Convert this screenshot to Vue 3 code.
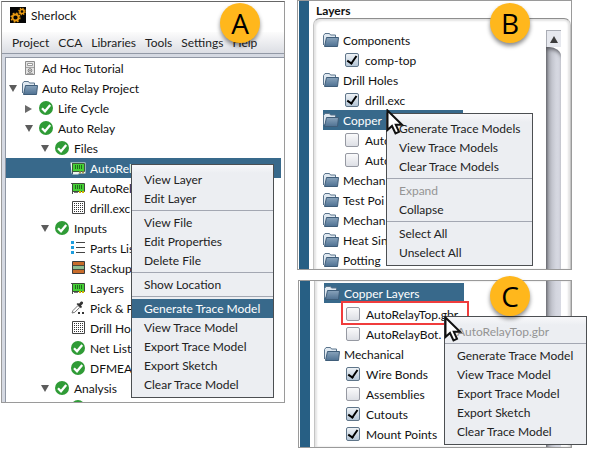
<script setup>
const menuBar = ['Project', 'CCA', 'Libraries', 'Tools', 'Settings', 'Help']

const tree = [
  { level: 0, icon: 'cabinet', label: 'Ad Hoc Tutorial' },
  { level: 0, icon: 'folder', label: 'Auto Relay Project', arrow: 'open' },
  { level: 1, icon: 'check', label: 'Life Cycle', arrow: 'closed' },
  { level: 1, icon: 'check', label: 'Auto Relay', arrow: 'open' },
  { level: 2, icon: 'check', label: 'Files', arrow: 'open' },
  { level: 3, icon: 'board-light', label: 'AutoRel', selected: true },
  { level: 3, icon: 'board', label: 'AutoRel' },
  { level: 3, icon: 'drill', label: 'drill.exc' },
  { level: 2, icon: 'check', label: 'Inputs', arrow: 'open' },
  { level: 3, icon: 'list', label: 'Parts Lis' },
  { level: 3, icon: 'stackup', label: 'Stackup' },
  { level: 3, icon: 'board', label: 'Layers' },
  { level: 3, icon: 'pick', label: 'Pick & P' },
  { level: 3, icon: 'drill', label: 'Drill Ho' },
  { level: 3, icon: 'check', label: 'Net List' },
  { level: 3, icon: 'check', label: 'DFMEA' },
  { level: 2, icon: 'check', label: 'Analysis', arrow: 'open' },
]

const fileMenu = [
  { label: 'View Layer' },
  { label: 'Edit Layer' },
  { sep: true },
  { label: 'View File' },
  { label: 'Edit Properties' },
  { label: 'Delete File' },
  { sep: true },
  { label: 'Show Location' },
  { sep: true },
  { label: 'Generate Trace Model', active: true },
  { label: 'View Trace Model' },
  { label: 'Export Trace Model' },
  { label: 'Export Sketch' },
  { label: 'Clear Trace Model' },
]

const layerPanels = [
  {
    id: 'b',
    badge: 'B',
    title: 'Layers',
    rows: [
      { folder: true, label: 'Components' },
      { label: 'comp-top', checked: true },
      { folder: true, label: 'Drill Holes' },
      { label: 'drill.exc', checked: true },
      { folder: true, label: 'Copper', selected: true },
      { label: 'Auto' },
      { label: 'Auto' },
      { folder: true, label: 'Mechan' },
      { folder: true, label: 'Test Poi' },
      { folder: true, label: 'Mechan' },
      { folder: true, label: 'Heat Sin' },
      { folder: true, label: 'Potting' },
    ],
    menu: [
      { label: 'Generate Trace Models' },
      { label: 'View Trace Models' },
      { label: 'Clear Trace Models' },
      { sep: true },
      { label: 'Expand', disabled: true },
      { label: 'Collapse' },
      { sep: true },
      { label: 'Select All' },
      { label: 'Unselect All' },
    ],
  },
  {
    id: 'c',
    badge: 'C',
    rows: [
      { folder: true, label: 'Copper Layers', selected: true },
      { label: 'AutoRelayTop.gbr', marked: true },
      { label: 'AutoRelayBot.' },
      { folder: true, label: 'Mechanical' },
      { label: 'Wire Bonds', checked: true },
      { label: 'Assemblies' },
      { label: 'Cutouts', checked: true },
      { label: 'Mount Points', checked: true },
    ],
    menu: [
      { label: 'AutoRelayTop.gbr', disabled: true },
      { sep: true },
      { label: 'Generate Trace Model' },
      { label: 'View Trace Model' },
      { label: 'Export Trace Model' },
      { label: 'Export Sketch' },
      { label: 'Clear Trace Model' },
    ],
  },
]
</script>

<template>
  <svg class="sprites" aria-hidden="true">
    <defs>
      <linearGradient id="folder-front" x1="0" y1="0" x2="0" y2="1">
        <stop offset="0" stop-color="#89a3bb" />
        <stop offset="1" stop-color="#4f7192" />
      </linearGradient>
      <symbol id="i-folder" viewBox="0 0 16 16">
        <path d="M0.500 13V3.500L2 1.500h4.500l1 1.500H12.500V6" fill="#dfe8f0" stroke="#5b748c" />
        <path d="M1.500 14.500L3.500 5.500H15.500L14.500 14.500Z" fill="url(#folder-front)" stroke="#3f5d79" stroke-linejoin="round" />
      </symbol>
      <symbol id="i-check" viewBox="0 0 16 16">
        <circle cx="8" cy="8" r="7" fill="#2f9b36" />
        <path d="M4 8.2L7 11.2L12.2 5" fill="none" stroke="#fff" stroke-width="2.3" />
      </symbol>
      <symbol id="i-cabinet" viewBox="0 0 16 16">
        <path d="M3.500 1.500h9v13h-9z" fill="#e4e4e4" stroke="#8d8d8d" />
        <path d="M5.500 3.500h5v2h-5z" fill="#fff" stroke="#9a9a9a" />
        <path d="M4 7.500h8M5 13.500h6" stroke="#a5a5a5" />
        <circle cx="8" cy="10.500" r="1.800" fill="#fff" stroke="#777" />
        <circle cx="8" cy="10.500" r=".7" fill="#555" />
      </symbol>
      <symbol id="i-board" viewBox="0 0 16 16">
        <path d="M1 3.500h2M2.500 3v11" fill="none" stroke="#555" />
        <path d="M2.500 3.500h12v8h-12z" fill="#45cf35" stroke="#3d4b3a" />
        <path d="M5.500 5v4M7.500 5v4M9.500 5v4M11.500 5v4" stroke="#206c1c" />
        <path d="M4 12.500h4" stroke="#777" />
        <path d="M9 12h5" stroke="#d3b700" stroke-width="2" stroke-dasharray="2 1" />
      </symbol>
      <symbol id="i-board-light" viewBox="0 0 16 16">
        <path d="M0.500 2.500h15v11h-7v1h-6v-1h-1z" fill="#eef5ee" />
        <path d="M2.500 3v11" stroke="#456" />
        <path d="M2.500 3.500h12v8h-12z" fill="#45cf35" stroke="#3d5b3a" />
        <path d="M5.500 5v4M7.500 5v4M9.500 5v4M11.500 5v4" stroke="#206c1c" />
        <path d="M9 12.500h5" stroke="#a89a5a" stroke-width="2" stroke-dasharray="2 1" />
      </symbol>
      <symbol id="i-drill" viewBox="0 0 16 16">
        <path d="M2.500 1.500h12v12h-12z" fill="#fff" stroke="#444" />
        <path
          d="M4 3.500h9M4 5.500h9M4 7.500h9M4 9.500h9M4 11.500h9"
          stroke="#333"
          stroke-dasharray="1 1"
        />
      </symbol>
      <symbol id="i-list" viewBox="0 0 16 16">
        <path d="M1 1h3v3h-3zM1 6h3v3h-3zM1 11h3v3h-3z" fill="#1e9ede" />
        <path d="M6 2.500h9M6 7.500h9M6 12.500h9" stroke="#444" />
      </symbol>
      <symbol id="i-stackup" viewBox="0 0 16 16">
        <path d="M2.500 1.500h12v12h-12z" fill="#c96c2b" stroke="#3c3c3c" />
        <path d="M3 5.500h11v4H3z" fill="#8dbd91" />
        <path d="M3 5.500h11M3 9.500h11" stroke="#4a4a3a" />
      </symbol>
      <symbol id="i-pick" viewBox="0 0 16 16">
        <path d="M2 13L3 10.500L8 5.500L9.800 7.300L4.800 12.300Z" fill="#fff" stroke="#777" />
        <path d="M6.500 4L8 3l1 .8L10.500 2C12 .6 14 2.500 12.700 4L11 5.500l1 1.200-1 1.500z" fill="#333" />
        <path d="M8 13h2M12 13h2" stroke="#333" stroke-width="2" />
      </symbol>
      <symbol id="i-cursor" viewBox="0 0 18 27">
        <path
          d="M1.500 1.500V21L6 17L9.500 24.500L13 22.800L9.800 15.800H16Z"
          fill="#fff"
          stroke="#111"
          stroke-width="2"
        />
      </symbol>
    </defs>
  </svg>

  <main class="page">
    <section class="panel project">
      <header class="title-bar">
        <svg class="logo" viewBox="0 0 16 16" aria-hidden="true">
          <path d="M0 0h16v16H0z" fill="#050505" />
          <circle cx="5.500" cy="10.500" r="3" fill="none" stroke="#e99a12" stroke-width="1.800" />
          <circle cx="5.500" cy="10.500" r="4.400" fill="none" stroke="#e99a12" stroke-width="1.400" stroke-dasharray="1.730 1.726" />
          <circle cx="12" cy="4.500" r="2.100" fill="none" stroke="#e99a12" stroke-width="1.500" />
          <circle cx="12" cy="4.500" r="3.200" fill="none" stroke="#e99a12" stroke-width="1.200" stroke-dasharray="1.256 1.257" />
        </svg>
        <span>Sherlock</span>
      </header>
      <nav class="menu-bar">
        <button v-for="name in menuBar" :key="name" type="button">{{ name }}</button>
      </nav>
      <div class="tree-frame">
        <ul class="tree">
          <li
            v-for="(row, i) in tree"
            :key="i"
            class="tree-row"
            :class="['level-' + row.level, { selected: row.selected }]"
          >
            <span class="twist">
              <i v-if="row.arrow" :class="row.arrow"></i>
            </span>
            <svg class="icon" aria-hidden="true"><use :href="'#i-' + row.icon" /></svg>
            <span>{{ row.label }}</span>
          </li>
          <li class="tree-row level-3 cut">
            <span class="twist"></span>
            <svg class="icon" aria-hidden="true"><use href="#i-check" /></svg>
          </li>
        </ul>
      </div>
      <div class="popup" role="menu">
        <template v-for="(item, i) in fileMenu" :key="i">
          <hr v-if="item.sep" />
          <button v-else type="button" role="menuitem" :class="{ active: item.active }">{{ item.label }}</button>
        </template>
      </div>
      <b class="badge">A</b>
    </section>

    <div class="stack">
      <section v-for="panel in layerPanels" :key="panel.id" class="panel layers" :class="panel.id">
        <div class="edge"></div>
        <div class="body">
          <h2 v-if="panel.title">{{ panel.title }}</h2>
          <div class="group">
            <ul class="list">
              <li
                v-for="(row, i) in panel.rows"
                :key="i"
                class="row"
                :class="{ selected: row.selected, marked: row.marked }"
              >
                <template v-if="row.folder">
                  <svg class="icon" aria-hidden="true"><use href="#i-folder" /></svg>
                  <span>{{ row.label }}</span>
                </template>
                <label v-else>
                  <input type="checkbox" :checked="row.checked" />
                  <span>{{ row.label }}</span>
                </label>
              </li>
            </ul>
            <div class="scroll">
              <button v-if="panel.title" type="button" aria-label="Scroll up"><i></i></button>
              <div class="track"></div>
            </div>
          </div>
        </div>
        <div class="popup" role="menu">
          <template v-for="(item, i) in panel.menu" :key="i">
            <hr v-if="item.sep" />
            <button v-else type="button" role="menuitem" :disabled="item.disabled">{{ item.label }}</button>
          </template>
        </div>
        <svg class="cursor" aria-hidden="true"><use href="#i-cursor" /></svg>
        <b class="badge">{{ panel.badge }}</b>
      </section>
    </div>
  </main>
</template>

<style>
body {
  margin: 0;
  background: #fff;
}
</style>

<style scoped>
.sprites {
  position: absolute;
  width: 0;
  height: 0;
}

.page {
  display: grid;
  grid-template-columns: 284fr 275fr;
  align-items: start;
  gap: 12px;
  padding: 0 17px 0 1px;
  font: 12px/20px Lato, "Open Sans", sans-serif;
  color: #111;
}

button {
  padding: 0;
  border: 0;
  background: none;
  font: inherit;
  color: inherit;
  text-align: left;
}

ul {
  margin: 0;
  padding: 0;
  list-style: none;
}

li,
button {
  white-space: nowrap;
}

.panel {
  position: relative;
  border: 1px solid #9a9a9a;
  background: #fff;
}

.icon {
  flex: none;
  width: 16px;
  height: 16px;
}

/* Project window */
.project {
  margin-top: 1px;
  border-top-color: #666;
}

.title-bar {
  display: flex;
  align-items: center;
  gap: 5px;
  height: 26px;
  padding: 0 8px 4px;
}

.title-bar span {
  padding-top: 2px;
}

.logo {
  width: 16px;
  height: 16px;
}

.menu-bar {
  display: flex;
  gap: 9px;
  height: 21px;
  padding: 0 10px;
  border-bottom: 1px solid #9299a6;
  background: linear-gradient(#fcfcfc, #dcdee4);
  color: #222;
}

.tree-frame {
  padding: 3px 0 0 3px;
  background: #d5d9e2;
}

.tree {
  border: 1px solid #9097a4;
  border-width: 1px 0 0 1px;
  background: #fff;
}

.tree-row {
  display: flex;
  align-items: center;
  height: 20px;
  margin-right: 3px;
}

.tree-row span {
  padding-top: 1px;
}

.tree-row .icon {
  margin-right: 4px;
}

.level-0 { padding-left: 3px; }
.level-1 { padding-left: 19px; }
.level-2 { padding-left: 35px; }
.level-3 { padding-left: 51px; }

.cut {
  align-items: flex-start;
  height: 4px;
  padding-top: 0;
  overflow: hidden;
}

.cut .icon {
  margin-top: 1px;
}

.selected {
  background: #38698b;
  color: #fff;
}

.twist {
  flex: none;
  width: 13px;
  line-height: 0;
}

.open,
.closed {
  display: inline-block;
  border: 4px solid transparent;
}

.open {
  border-top: 7px solid #5c5c5c;
  border-bottom: 0;
}

.closed {
  border-left: 7px solid #6a6a6a;
  border-right: 0;
}

/* Popup menus */
.popup {
  position: absolute;
  z-index: 1;
  display: flex;
  flex-direction: column;
  box-sizing: border-box;
  width: 143px;
  padding: 5px 0 3px;
  border: 1px solid #4c4f52;
  background: linear-gradient(#f8f8fa, #eceef2 8px);
  color: #222;
}

.popup button {
  height: 19px;
  padding: 0 12px;
  line-height: 20px;
}

.popup .active {
  background: #38698b;
  color: #fff;
}

.popup button:disabled {
  color: #949494;
}

.popup hr {
  width: 100%;
  height: 1px;
  margin: 2px 0;
  border: 0;
  background: #a3a7b2;
}

.project .popup {
  left: 129px;
  top: 162px;
}

.b .popup {
  left: 88px;
  top: 112px;
  width: 147px;
}

.c .popup {
  left: 145px;
  top: 35px;
}

/* Layer windows */
.stack {
  display: grid;
  gap: 10px;
}

.layers {
  display: flex;
}

.c {
  margin-left: 1px;
}

.edge {
  flex: none;
  width: 10px;
  margin-left: 1px;
  background: #275f84;
}

.body {
  flex: 1;
  min-width: 0;
  padding-left: 4px;
}

h2 {
  height: 17px;
  margin: 0;
  padding-left: 3px;
  font-size: 12px;
  line-height: 20px;
}

.group {
  display: flex;
  justify-content: space-between;
  padding: 0 9px;
  border-left: 1px solid #c4c4c4;
  border-right: 1px solid #c4c4c4;
  box-shadow: inset 2px 0 2px #e4e4e4, inset -2px 0 2px #e4e4e4;
}

.b .group {
  padding-top: 11px;
  border-top: 1px solid #8e8e8e;
  border-radius: 7px 7px 0 0;
  box-shadow: inset 2px 2px 2px #e4e4e4, inset -2px 0 2px #e4e4e4;
}

.list {
  width: 59%;
}

.b .list {
  margin-bottom: -1px;
}

.c .list {
  padding: 2px 0 3px;
}

.row {
  position: relative;
  display: flex;
  align-items: center;
  gap: 4px;
  height: 20px;
}

.c .selected {
  margin-bottom: 1px;
}

.row span {
  padding-top: 1px;
}

.row label {
  display: flex;
  align-items: center;
  gap: 6px;
  padding-left: 22px;
}

input {
  appearance: none;
  display: grid;
  box-sizing: border-box;
  width: 14px;
  height: 14px;
  margin: 0;
  border: 1px solid #9699a2;
  border-radius: 2px;
  background: linear-gradient(#fafafb, #dddfe5);
}

input:checked {
  border-color: #5f7589;
  background: linear-gradient(#eef2f6, #b5c6d6);
}

input:checked::before {
  content: "";
  box-sizing: border-box;
  width: 6px;
  height: 10px;
  margin-left: 3px;
  border: solid #000;
  border-width: 0 2px 2px 0;
  transform: rotate(35deg);
}

.marked::after {
  content: "";
  position: absolute;
  inset: -3px -5px -1px 17px;
  border: 2px solid #f03c3c;
}

.scroll {
  display: flex;
  flex-direction: column;
  width: 15px;
}

.scroll button {
  display: grid;
  place-items: center;
  height: 17px;
  border: 1px solid #aaadb5;
  border-right: 0;
  border-bottom: 0;
  background: #e6e8ee;
}

.scroll button i {
  border: 4px solid transparent;
  border-top: 0;
  border-bottom: 7px solid #3c3c3c;
}

.track {
  flex: 1;
  background: linear-gradient(90deg, #6e6f75, #a9abb3 3px, #c3c5ce 6px, #d4d6df 10px, #d8dae3);
}

.b .track {
  border-top-right-radius: 12px 9px;
  box-shadow: inset 0 4px 4px -2px #55565c;
}

.cursor {
  position: absolute;
  z-index: 2;
  width: 18px;
  height: 27px;
}

.b .cursor {
  left: 88px;
  top: 108px;
}

.c .cursor {
  left: 145px;
  top: 35px;
}

/* Callout badges */
.badge {
  position: absolute;
  z-index: 3;
  width: 40px;
  height: 40px;
  border-radius: 50%;
  background: #ffb71c;
  box-shadow: 0 3px 4px rgba(0, 0, 0, 0.45);
  color: #000;
  font-size: 28px;
  font-weight: 400;
  font-family: "Open Sans", sans-serif;
  line-height: 40px;
  text-align: center;
}

.project .badge {
  right: 24px;
  top: 1px;
}

.b .badge {
  right: 41px;
  top: 2px;
}

.c .badge {
  right: 41px;
  top: -5px;
}
</style>
